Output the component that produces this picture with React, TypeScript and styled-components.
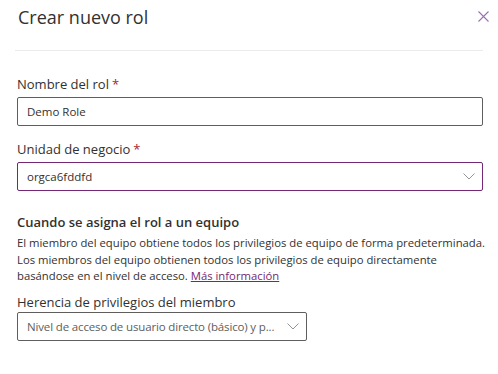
import React from "react";
import styled, { createGlobalStyle } from "styled-components";

const GlobalStyle = createGlobalStyle`
	html, body {
		margin: 0;
		padding: 0;
		background: #ffffff;
	}
	body {
		font-family: "Segoe UI", "Open Sans", "Noto Sans", sans-serif;
		color: #323130;
	}
`;

const Panel = styled.div`
	width: 498px;
	height: 374px;
	box-sizing: border-box;
	padding: 0 15px 0 17px;
	display: flex;
	flex-direction: column;
	overflow: hidden;
`;

const Header = styled.header`
	display: flex;
	justify-content: space-between;
	align-items: flex-start;
	height: 51px;
	box-sizing: border-box;
	padding: 3px 0 0 3px;
	margin-left: -2px;
	border-bottom: 1px solid #edebe9;
`;

const Title = styled.h1`
	margin: 0;
	font-size: 18px;
	font-weight: 400;
	line-height: 28px;
	color: #323130;
`;

const CloseButton = styled.button`
	border: 0;
	background: transparent;
	padding: 0;
	margin: 7px -6px 0 0;
	width: 12px;
	height: 12px;
	display: flex;
	align-items: center;
	justify-content: center;
	cursor: pointer;
`;

const Field = styled.div<{ $top: number }>`
	display: flex;
	flex-direction: column;
	margin-top: ${(p) => p.$top}px;
`;

const Label = styled.label<{ $gap?: number }>`
	font-size: 13px;
	line-height: 20px;
	font-weight: 400;
	color: #323130;
	margin-bottom: ${(p) => p.$gap ?? 3}px;
`;

const Required = styled.span`
	color: #a4262c;
	margin-left: 3px;
`;

const Box = styled.div<{ $focused?: boolean; $width?: number }>`
	box-sizing: border-box;
	height: 29px;
	width: ${(p) => (p.$width ? `${p.$width}px` : "100%")};
	border: 1px solid ${(p) => (p.$focused ? "#742774" : "#605e5c")};
	border-radius: 2px;
	display: flex;
	align-items: center;
	gap: 6px;
	padding: 0 7px 0 9px;
	font-size: 11.5px;
	color: #323130;
	background: #fff;

	svg {
		flex-shrink: 0;
	}
`;

const BoxText = styled.span<{ $muted?: boolean }>`
	flex: 1;
	min-width: 0;
	overflow: hidden;
	white-space: nowrap;
	color: ${(p) => (p.$muted ? "#605e5c" : "#323130")};
	letter-spacing: ${(p) => (p.$muted ? "-0.15px" : "0")};
`;

const Section = styled.section`
	margin-top: 21px;
	display: flex;
	flex-direction: column;
`;

const SectionTitle = styled.h2`
	margin: 0;
	font-size: 13px;
	font-weight: 600;
	line-height: 20px;
	color: #323130;
`;

const Description = styled.p`
	margin: 3px 0 0;
	font-size: 11.3px;
	line-height: 16.5px;
	color: #323130;
	width: 480px;
	white-space: nowrap;
`;

const Link = styled.a`
	color: #742774;
	text-decoration: underline;
`;

const Chevron = () => (
	<svg width="12" height="7" viewBox="0 0 12 7" fill="none">
		<path d="M0.5 0.5 L6 6 L11.5 0.5" stroke="#8a8886" strokeWidth="0.9" />
	</svg>
);

const App = () => {
	return (
		<>
			<GlobalStyle />
			<Panel>
				<Header>
					<Title>Crear nuevo rol</Title>
					<CloseButton aria-label="Cerrar">
						<svg width="11" height="11" viewBox="0 0 11 11">
							<path d="M0.5 0.5 L10.5 10.5 M10.5 0.5 L0.5 10.5" stroke="#a16cb3" strokeWidth="1.1" />
						</svg>
					</CloseButton>
				</Header>

				<Field $top={23}>
					<Label>
						Nombre del rol<Required>*</Required>
					</Label>
					<Box>
						<BoxText>Demo Role</BoxText>
					</Box>
				</Field>

				<Field $top={13}>
					<Label>
						Unidad de negocio<Required>*</Required>
					</Label>
					<Box $focused>
						<BoxText>orgca6fddfd</BoxText>
						<Chevron />
					</Box>
				</Field>

				<Section>
					<SectionTitle>Cuando se asigna el rol a un equipo</SectionTitle>
					<Description>
						El miembro del equipo obtiene todos los privilegios de equipo de forma predeterminada.
						<br />
						Los miembros del equipo obtienen todos los privilegios de equipo directamente
						<br />
						basándose en el nivel de acceso. <Link href="#">Más información</Link>
					</Description>
				</Section>

				<Field $top={7}>
					<Label $gap={0}>Herencia de privilegios del miembro</Label>
					<Box $width={290}>
						<BoxText $muted>Nivel de acceso de usuario directo (básico) y p...</BoxText>
						<Chevron />
					</Box>
				</Field>
			</Panel>
		</>
	);
};

export default App;
